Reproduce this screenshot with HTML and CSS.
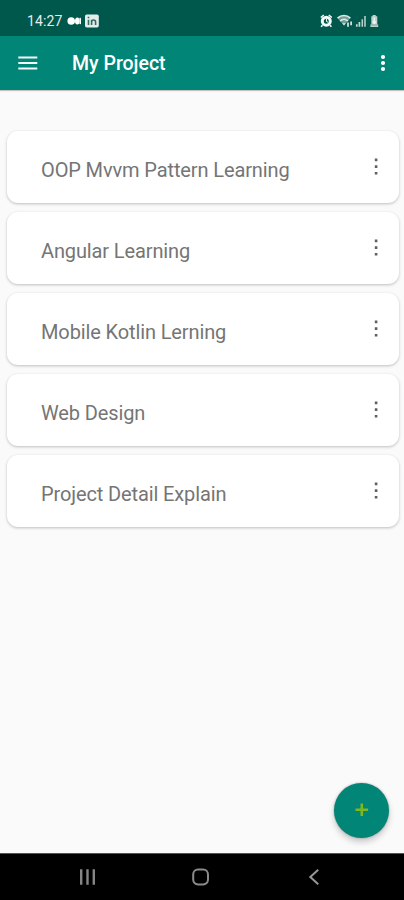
FILE: index.html
```html
<!DOCTYPE html>
<html lang="en">
<head>
<meta charset="utf-8">
<meta name="viewport" content="width=device-width, initial-scale=1">
<title>My Project</title>
<link rel="stylesheet" href="styles.css">
</head>
<body>
<div class="screen">
  <div class="status">
    <span class="time">14:27</span>
    <svg class="notices" width="32" height="14" viewBox="0 0 32 14">
      <circle cx="4.2" cy="7" r="3.8" fill="#fff"/>
      <ellipse cx="10.3" cy="7" rx="2.3" ry="3.6" fill="#fff"/>
      <rect x="12.4" y="3.8" width="1.6" height="6.4" rx=".7" fill="#fff"/>
      <rect x="18" y=".5" width="13.8" height="13" rx="1.8" fill="#e3eeeb"/>
      <path d="M21.5 5.7v5.3M21.5 2.8v1.4M24.6 11V5.7M24.6 8c0-2.6 4-2.6 4 0v3" fill="none" stroke="#38695f" stroke-width="1.6"/>
    </svg>
    <svg class="signals" width="60" height="14" viewBox="0 0 60 14">
      <circle cx="6.3" cy="7.2" r="4" fill="none" stroke="#f3faf8" stroke-width="3"/>
      <path d="M.8 3.5l3-2.5M11.8 3.5l-3-2.5M2.5 11.2l-1.4 1.6M10 11.2l1.4 1.6" stroke="#f3faf8" stroke-width="1.6"/>
      <path d="M6.5 4.8v2.7l1.8.8" fill="none" stroke="#f3faf8" stroke-width="1"/>
      <path d="M17.5 4.1C21.2.7 26.8.7 30.4 4.1L24 11.5z" fill="#719e95"/>
      <path d="M17.5 4.1C21.2.7 26.8.7 30.4 4.1M20 7c2.4-2.1 5.6-2.1 8 0" fill="none" stroke="#dcebe7" stroke-width="1.6"/>
      <path d="M22.2 9.3h3.6L24 11.6z" fill="#dcebe7"/>
      <path d="M28 8.4v4.4M31.1 7.4v3.8" stroke="#e9f3f0" stroke-width="1.6"/>
      <path d="M36.8 10.3v2.5M39.4 8v4.8" stroke="#c5d9d4" stroke-width="1.7"/>
      <path d="M42.3 5.3v7.5M45 2v10.8" stroke="#b5cec8" stroke-width="1.6"/>
      <path d="M52.7 1h3v1.3h1.6v8.2h.9v2.4h-7.8v-2.4h.9V2.3h1.4z" fill="#bdd3ce"/>
      <path d="M54.3 3.4v6M52.7 7.5l1.6 1.9 1.6-1.9" fill="none" stroke="#eff7f5" stroke-width="1.3"/>
      <path d="M51.3 11h6.2" stroke="#6a968d" stroke-width=".8"/>
    </svg>
  </div>
  <header class="bar">
    <svg class="menu" width="20" height="14" viewBox="0 0 20 14"><path d="M.3 1.5h19M.3 7h19M.3 12.5h19" stroke="#f5fbfa" stroke-width="1.9"/></svg>
    <h1 class="title">My Project</h1>
    <svg class="more" width="6" height="18" viewBox="0 0 6 18" fill="#fff"><circle cx="3" cy="3" r="2.1"/><circle cx="3" cy="9" r="2.1"/><circle cx="3" cy="15" r="2.1"/></svg>
  </header>
  <main class="list">
    <div class="card"><span class="name">OOP Mvvm Pattern Learning</span><svg class="dots" width="4" height="18" viewBox="0 0 4 18"><path d="M.8 1.6h2.6v2.6H.8zM.8 8.3h2.6v2.6H.8zM.8 15h2.6v2.6H.8z"/></svg></div>
    <div class="card"><span class="name">Angular Learning</span><svg class="dots" width="4" height="18" viewBox="0 0 4 18"><path d="M.8 1.6h2.6v2.6H.8zM.8 8.3h2.6v2.6H.8zM.8 15h2.6v2.6H.8z"/></svg></div>
    <div class="card"><span class="name">Mobile Kotlin Lerning</span><svg class="dots" width="4" height="18" viewBox="0 0 4 18"><path d="M.8 1.6h2.6v2.6H.8zM.8 8.3h2.6v2.6H.8zM.8 15h2.6v2.6H.8z"/></svg></div>
    <div class="card"><span class="name">Web Design</span><svg class="dots" width="4" height="18" viewBox="0 0 4 18"><path d="M.8 1.6h2.6v2.6H.8zM.8 8.3h2.6v2.6H.8zM.8 15h2.6v2.6H.8z"/></svg></div>
    <div class="card"><span class="name">Project Detail Explain</span><svg class="dots" width="4" height="18" viewBox="0 0 4 18"><path d="M.8 1.6h2.6v2.6H.8zM.8 8.3h2.6v2.6H.8zM.8 15h2.6v2.6H.8z"/></svg></div>
  </main>
  <button class="fab" aria-label="Add project"><svg width="14" height="14" viewBox="0 0 14 14"><path d="M6.8.5v12.6M.5 6.8h12.6" stroke="#80b81c" stroke-width="2.6"/></svg></button>
  <nav class="nav">
    <svg width="18" height="18" viewBox="0 0 18 18"><path d="M2.2 1.3v15.4M8.5 1.3v15.4M14.8 1.3v15.4" stroke="#858585" stroke-width="2.4"/></svg>
    <svg width="18" height="18" viewBox="0 0 18 18"><rect x="1.2" y="1.6" width="14.8" height="14.8" rx="4.8" fill="none" stroke="#8b8b8b" stroke-width="2"/></svg>
    <svg width="18" height="18" viewBox="0 0 18 18"><path d="M13.2 1.8L5.3 9l7.9 7.2" fill="none" stroke="#969696" stroke-width="2"/></svg>
  </nav>
</div>
</body>
</html>
```
FILE: styles.css
```css
* { box-sizing: border-box; }
body { margin: 0; font-family: Roboto, sans-serif; background: #fafafa; }
svg { display: block; flex: none; }
.screen { position: relative; display: flex; flex-direction: column; height: 900px; overflow: hidden; }
.status { display: flex; align-items: center; flex: none; height: 36px; padding: 6px 24px 0 27px; background: #00574b; color: #e3eeeb; }
.time { width: 40px; font-size: 14px; line-height: 16px; letter-spacing: .1px; }
.signals { margin-left: auto; }
.bar { display: flex; align-items: center; flex: none; height: 54px; padding: 0 18px; background: #008577; box-shadow: 0 1px 1px rgba(0,0,0,.22); }
.title { margin: 2px 0 0 34px; font-size: 19.5px; line-height: 24px; font-weight: 500; color: #fff; }
.more { margin-left: auto; }
.list { display: flex; flex: 1; flex-direction: column; gap: 9.5px; padding: 41px 5px 0 6.5px; }
.card { display: flex; align-items: center; height: 71.5px; padding: 6px 21px 0 34.5px; border-radius: 11px; background: #fff; box-shadow: 0 1px 3px rgba(0,0,0,.24); }
.name { font-size: 20px; line-height: 24px; letter-spacing: -.12px; color: #757575; }
.dots { margin: -8px 0 0 auto; fill: #606060; }
.fab { position: absolute; right: 15px; bottom: 62.5px; display: flex; align-items: center; justify-content: center; width: 55px; height: 55px; padding: 0; border: 0; border-radius: 50%; background: #008577; box-shadow: 0 4px 6px rgba(0,0,0,.2), 0 0 2px rgba(0,0,0,.35); }
.nav { display: flex; align-items: center; justify-content: space-between; flex: none; height: 47px; padding: 0 81px 0 79px; border-top: 1px solid #555; background: #000; }
```
